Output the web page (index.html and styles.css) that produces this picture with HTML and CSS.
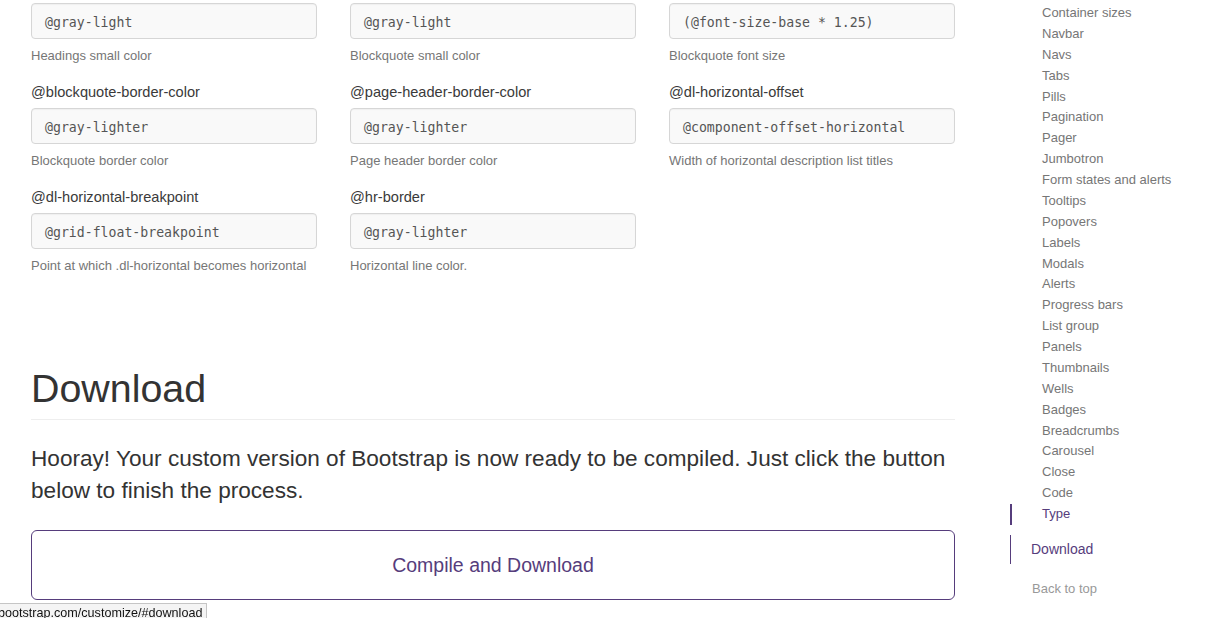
FILE: index.html
```html
<!DOCTYPE html>
<html lang="en">
<head>
<meta charset="utf-8">
<title>Customize Bootstrap</title>
<link rel="stylesheet" href="styles.css">
</head>
<body>
<div class="page">
  <main class="main">
    <div class="vars">
      <div class="field">
        <div class="input">@gray-light</div>
        <p class="help">Headings small color</p>
      </div>
      <div class="field">
        <div class="input">@gray-light</div>
        <p class="help">Blockquote small color</p>
      </div>
      <div class="field">
        <div class="input">(@font-size-base * 1.25)</div>
        <p class="help">Blockquote font size</p>
      </div>

      <div class="field">
        <label class="label">@blockquote-border-color</label>
        <div class="input">@gray-lighter</div>
        <p class="help">Blockquote border color</p>
      </div>
      <div class="field">
        <label class="label">@page-header-border-color</label>
        <div class="input">@gray-lighter</div>
        <p class="help">Page header border color</p>
      </div>
      <div class="field">
        <label class="label">@dl-horizontal-offset</label>
        <div class="input">@component-offset-horizontal</div>
        <p class="help">Width of horizontal description list titles</p>
      </div>

      <div class="field">
        <label class="label">@dl-horizontal-breakpoint</label>
        <div class="input">@grid-float-breakpoint</div>
        <p class="help">Point at which .dl-horizontal becomes horizontal</p>
      </div>
      <div class="field">
        <label class="label">@hr-border</label>
        <div class="input">@gray-lighter</div>
        <p class="help">Horizontal line color.</p>
      </div>
    </div>

    <section class="download">
      <div class="page-header">
        <h1>Download</h1>
      </div>
      <p class="lead">Hooray! Your custom version of Bootstrap is now ready to be compiled. Just click the button below to finish the process.</p>
      <a class="btn" href="#">Compile and Download</a>
    </section>
  </main>

  <nav class="sidebar">
    <ul class="subnav">
      <li>Container sizes</li>
      <li>Navbar</li>
      <li>Navs</li>
      <li>Tabs</li>
      <li>Pills</li>
      <li>Pagination</li>
      <li>Pager</li>
      <li>Jumbotron</li>
      <li>Form states and alerts</li>
      <li>Tooltips</li>
      <li>Popovers</li>
      <li>Labels</li>
      <li>Modals</li>
      <li>Alerts</li>
      <li>Progress bars</li>
      <li>List group</li>
      <li>Panels</li>
      <li>Thumbnails</li>
      <li>Wells</li>
      <li>Badges</li>
      <li>Breadcrumbs</li>
      <li>Carousel</li>
      <li>Close</li>
      <li>Code</li>
      <li class="active">Type</li>
    </ul>
    <div class="top-item">Download</div>
    <div class="back">Back to top</div>
  </nav>
</div>
<div class="status">bootstrap.com/customize/#download</div>
</body>
</html>
```

FILE: styles.css
```css
html, body {
  margin: 0;
  padding: 0;
  background: #fff;
  height: 100%;
  overflow: hidden;
}
body {
  font-family: "Liberation Sans", Arial, sans-serif;
  color: #333;
}
.page {
  display: flex;
  align-items: flex-start;
}
.main {
  margin-left: 31px;
  width: 924px;
  padding-top: 3px;
}
.vars {
  display: grid;
  grid-template-columns: 286px 286px 286px;
  column-gap: 33px;
  row-gap: 17px;
}
.field {
  display: flex;
  flex-direction: column;
}
.label {
  font-size: 14.6px;
  line-height: 20px;
  color: #3a3a3a;
  margin-bottom: 6px;
}
.input {
  height: 34px;
  border: 1px solid #d6d6d6;
  border-radius: 4px;
  background: #f9f9f9;
  box-sizing: content-box;
  padding: 0 13px;
  font-family: "DejaVu Sans Mono", "Liberation Mono", monospace;
  font-size: 13.2px;
  line-height: 37px;
  color: #555;
  box-shadow: inset 0 1px 1px rgba(0,0,0,0.04);
}
.help {
  margin: 7px 0 0;
  font-size: 13px;
  line-height: 20px;
  color: #767676;
}
.vars .field .help {
  margin-bottom: -1px;
}
.download {
  margin-top: 92px;
}
.page-header {
  padding-bottom: 9px;
  border-bottom: 1px solid #eee;
}
.page-header h1 {
  margin: 0;
  font-size: 39.4px;
  font-weight: 400;
  line-height: 43px;
  color: #333;
}
.lead {
  margin: 23px 0 0;
  font-size: 22.6px;
  line-height: 32px;
  color: #333;
}
.btn {
  display: block;
  margin-top: 23px;
  height: 68px;
  border: 1px solid #563d7c;
  border-radius: 6px;
  text-align: center;
  font-size: 19.5px;
  line-height: 68px;
  color: #563d7c;
  text-decoration: none;
}
.sidebar {
  margin-left: 55px;
  width: 200px;
  padding-top: 3px;
}
.subnav {
  list-style: none;
  margin: 0;
  padding: 0;
}
.subnav li {
  font-size: 13px;
  line-height: 18.875px;
  padding: 1px 0 1px 32px;
  color: #767676;
}
.subnav li.active {
  color: #563d7c;
  border-left: 2px solid #563d7c;
  padding-left: 30px;
}
.top-item {
  margin-top: 10px;
  border-left: 1px solid #563d7c;
  padding: 5px 0 5px 20px;
  font-size: 14px;
  line-height: 19px;
  color: #563d7c;
}
.back {
  margin-top: 15px;
  padding-left: 22px;
  font-size: 13px;
  line-height: 20px;
  color: #999;
}
.status {
  position: fixed;
  left: 0;
  bottom: 0;
  height: 14px;
  padding: 0 4px 0 0;
  background: #f4f4f4;
  border-top: 1px solid #c5c5c5;
  border-right: 1px solid #c5c5c5;
  font-family: "Liberation Sans", Arial, sans-serif;
  font-size: 12.6px;
  line-height: 18px;
  color: #111;
  white-space: nowrap;
  text-indent: -2px;
}
```
